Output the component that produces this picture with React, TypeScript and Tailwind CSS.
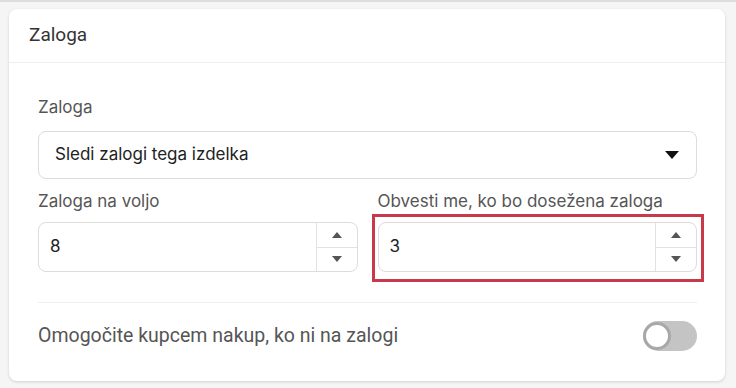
const NumberField = ({ value }: { value: string }) => (
  <div className="flex h-[50px] rounded-lg border border-[#dcdcdc] bg-white overflow-hidden">
    <div className="flex-1 flex items-center pl-[11px] text-[17px] text-[#222]">{value}</div>
    <div className="w-[41px] flex flex-col border-l border-[#e2e2e2]">
      <div className="flex-1 flex items-center justify-center border-b border-[#e2e2e2]">
        <svg width="10" height="6" viewBox="0 0 10 6">
          <path d="M0 6 L5 0 L10 6 Z" fill="#555" />
        </svg>
      </div>
      <div className="flex-1 flex items-center justify-center">
        <svg width="10" height="6" viewBox="0 0 10 6">
          <path d="M0 0 L10 0 L5 6 Z" fill="#555" />
        </svg>
      </div>
    </div>
  </div>
);

export default function App() {
  return (
    <div className="min-h-[388px] bg-[#f5f5f5] font-['Inter',sans-serif]">
      <div className="h-[2px] bg-[#dedede]" />
      <div className="ml-[9px] mt-[7px] w-[716px] rounded-lg bg-white shadow-[0_1px_3px_rgba(0,0,0,0.15)]">
        <div className="h-[54px] flex items-center pl-[20px] border-b border-[#eeeeee] font-['Roboto',sans-serif] text-[19px] text-[#333]">
          Zaloga
        </div>
        <div className="pl-[29px] pr-[28px] pt-[32px] pb-[30px]">
          <div className="text-[17px] leading-6 text-[#555]">Zaloga</div>
          <div className="mt-[12px] h-[48px] flex items-center justify-between rounded-lg border border-[#dcdcdc] pl-[16px] pr-[17px]">
            <span className="text-[17px] text-[#222]">Sledi zalogi tega izdelka</span>
            <svg width="14" height="8" viewBox="0 0 14 8">
              <path d="M0 0 L14 0 L7 8 Z" fill="#111" />
            </svg>
          </div>
          <div className="mt-[10px] grid grid-cols-2 gap-[20px]">
            <div>
              <div className="text-[17px] leading-6 text-[#555]">Zaloga na voljo</div>
              <div className="mt-[9px]">
                <NumberField value="8" />
              </div>
            </div>
            <div>
              <div className="text-[17px] leading-6 text-[#555]">Obvesti me, ko bo dosežena zaloga</div>
              <div className="mt-[9px] relative">
                <NumberField value="3" />
                <div className="absolute -left-[6px] -right-[7px] -top-[8px] -bottom-[10px] border-[3px] border-[#c83a4a] pointer-events-none" />
              </div>
            </div>
          </div>
          <div className="mt-[30px] h-px bg-[#eeeeee]" />
          <div className="mt-[18px] flex items-center justify-between">
            <span className="font-['Roboto',sans-serif] text-[19.5px] text-[#555]">
              Omogočite kupcem nakup, ko ni na zalogi
            </span>
            <div className="relative w-[54px] h-[30px] rounded-full bg-[#c4c4c4]">
              <div className="absolute left-0 top-px w-[28px] h-[28px] rounded-full bg-white border-[3px] border-[#a8a8a8]" />
            </div>
          </div>
        </div>
      </div>
    </div>
  );
}
